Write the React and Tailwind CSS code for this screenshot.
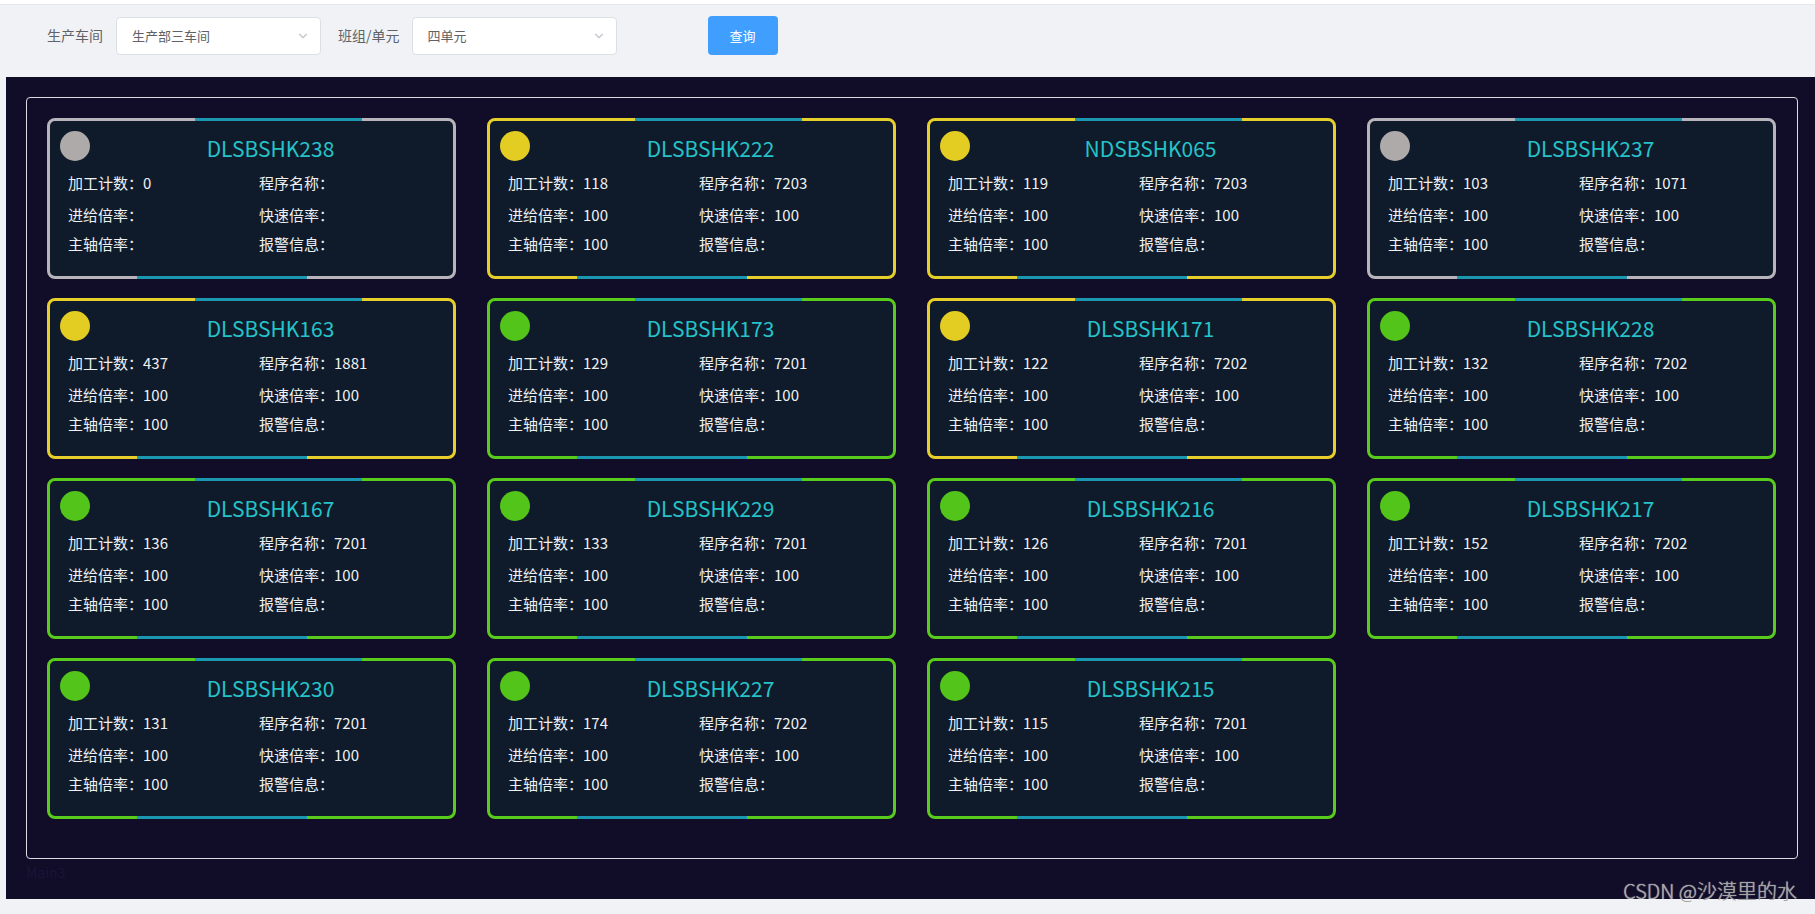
import { ChevronDown } from "lucide-react";

const colors = {
    gray: { border: "border-[#b7b4bc]", dot: "bg-[#aeaaaa]" },
    yellow: { border: "border-[#e7cf2b]", dot: "bg-[#e4cd22]" },
    green: { border: "border-[#58cb1c]", dot: "bg-[#52c41a]" },
};

const machines = [
    { name: "DLSBSHK238", status: "gray", count: "0", prog: "", feed: "", fast: "", spindle: "" },
    { name: "DLSBSHK222", status: "yellow", count: "118", prog: "7203", feed: "100", fast: "100", spindle: "100" },
    { name: "NDSBSHK065", status: "yellow", count: "119", prog: "7203", feed: "100", fast: "100", spindle: "100" },
    { name: "DLSBSHK237", status: "gray", count: "103", prog: "1071", feed: "100", fast: "100", spindle: "100" },
    { name: "DLSBSHK163", status: "yellow", count: "437", prog: "1881", feed: "100", fast: "100", spindle: "100" },
    { name: "DLSBSHK173", status: "green", count: "129", prog: "7201", feed: "100", fast: "100", spindle: "100" },
    { name: "DLSBSHK171", status: "yellow", count: "122", prog: "7202", feed: "100", fast: "100", spindle: "100" },
    { name: "DLSBSHK228", status: "green", count: "132", prog: "7202", feed: "100", fast: "100", spindle: "100" },
    { name: "DLSBSHK167", status: "green", count: "136", prog: "7201", feed: "100", fast: "100", spindle: "100" },
    { name: "DLSBSHK229", status: "green", count: "133", prog: "7201", feed: "100", fast: "100", spindle: "100" },
    { name: "DLSBSHK216", status: "green", count: "126", prog: "7201", feed: "100", fast: "100", spindle: "100" },
    { name: "DLSBSHK217", status: "green", count: "152", prog: "7202", feed: "100", fast: "100", spindle: "100" },
    { name: "DLSBSHK230", status: "green", count: "131", prog: "7201", feed: "100", fast: "100", spindle: "100" },
    { name: "DLSBSHK227", status: "green", count: "174", prog: "7202", feed: "100", fast: "100", spindle: "100" },
    { name: "DLSBSHK215", status: "green", count: "115", prog: "7201", feed: "100", fast: "100", spindle: "100" },
];

const Select = ({ value }) => (
    <div className="w-[205px] h-[38px] bg-white border border-[#dcdfe6] rounded-[4px] flex items-center justify-between pl-[15px] pr-[10px]">
        <span className="text-[13px] text-[#606266]">{value}</span>
        <ChevronDown size={14} className="text-[#c0c4cc]" />
    </div>
);

const MachineCard = ({ m }) => {
    const c = colors[m.status];
    return (
        <div className={`relative h-[161px] bg-[#0f1b2a] border-[3px] ${c.border} rounded-[8px] p-[10px]`}>
            {/* cyan accents on the border */}
            <div className="absolute top-[-3px] left-[145px] w-[167px] h-[3px] bg-[#1b98b0]"></div>
            <div className="absolute bottom-[-3px] left-[87px] w-[170px] h-[3px] bg-[#1b98b0]"></div>
            <div className="flex items-start">
                <div className={`w-[30px] h-[30px] rounded-full ${c.dot}`}></div>
                <div className="flex-1 text-center pt-[2px] pl-[8px] leading-[30px] text-[21px] text-[#25c3c9]">{m.name}</div>
            </div>
            <div className="mt-[9px] pl-[8px] text-[15px] leading-[22px] text-[#eef0f2]">
                <div className="grid grid-cols-[191px_1fr]">
                    <div>加工计数：{m.count}</div>
                    <div>程序名称：{m.prog}</div>
                </div>
                <div className="grid grid-cols-[191px_1fr] mt-[10px]">
                    <div>进给倍率：{m.feed}</div>
                    <div>快速倍率：{m.fast}</div>
                </div>
                <div className="grid grid-cols-[191px_1fr] mt-[7px]">
                    <div>主轴倍率：{m.spindle}</div>
                    <div>报警信息：</div>
                </div>
            </div>
        </div>
    );
};

const App = () => {
    return (
        <div className="relative w-full min-h-[914px] bg-[#f0f2f5] font-['Noto_Sans_CJK_SC','Noto_Sans',sans-serif]">
            <div className="h-[5px] bg-white border-b border-[#e4e7ed]"></div>
            <div className="flex items-center pl-[47px] pt-[11px] pb-[22px]">
                <span className="text-[14px] text-[#606266] mr-[13px]">生产车间</span>
                <Select value="生产部三车间" />
                <span className="text-[14px] text-[#606266] ml-[17px] mr-[12px]">班组/单元</span>
                <Select value="四单元" />
                <button className="ml-[91px] w-[70px] h-[39px] rounded-[4px] bg-[#409eff] text-white text-[13px]">查询</button>
            </div>
            <div className="ml-[6px] h-[822px] bg-[#110c28] pt-[20px] pl-[20px] pr-[17px]">
                <div className="h-[762px] border border-[#dcdce4] rounded-[4px] pt-[20px] pl-[20px]">
                    <div className="grid grid-cols-[repeat(4,409px)] gap-x-[31px] gap-y-[19px]">
                        {machines.map((m) => (
                            <MachineCard key={m.name} m={m} />
                        ))}
                    </div>
                </div>
                <div className="mt-[3px] text-[14px] text-[#1a1534]">Main3</div>
            </div>
            <div className="absolute right-[18px] bottom-[8px] text-[20px] font-light text-[#a3a3a3] [text-shadow:0_0_1px_#e8e8e8]">CSDN @沙漠里的水</div>
        </div>
    );
};

export default App;
